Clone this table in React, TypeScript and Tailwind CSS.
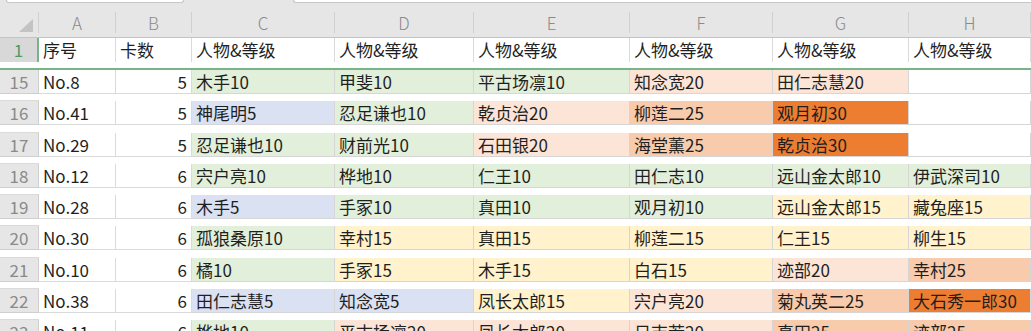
import React from 'react';

type Tone = 'w' | 'g' | 'b' | 'y' | 'p' | 'o' | 'd';

const toneClass: Record<Tone, string> = {
  w: 'bg-white',
  g: 'bg-[#e2efda]',
  b: 'bg-[#d9e1f2]',
  y: 'bg-[#fff2cc]',
  p: 'bg-[#fce4d6]',
  o: 'bg-[#f8cbad]',
  d: 'bg-[#ed7d31]',
};

// [row number, 序号, 卡数, ...[text, tone] for C..H]
const rows: [number, string, number, [string, Tone][]][] = [
  [15, 'No.8', 5, [['木手10', 'g'], ['甲斐10', 'g'], ['平古场凛10', 'g'], ['知念宽20', 'p'], ['田仁志慧20', 'p'], ['', 'w']]],
  [16, 'No.41', 5, [['神尾明5', 'b'], ['忍足谦也10', 'g'], ['乾贞治20', 'p'], ['柳莲二25', 'o'], ['观月初30', 'd'], ['', 'w']]],
  [17, 'No.29', 5, [['忍足谦也10', 'g'], ['财前光10', 'g'], ['石田银20', 'p'], ['海堂薰25', 'o'], ['乾贞治30', 'd'], ['', 'w']]],
  [18, 'No.12', 6, [['宍户亮10', 'g'], ['桦地10', 'g'], ['仁王10', 'g'], ['田仁志10', 'g'], ['远山金太郎10', 'g'], ['伊武深司10', 'g']]],
  [19, 'No.28', 6, [['木手5', 'b'], ['手冢10', 'g'], ['真田10', 'g'], ['观月初10', 'g'], ['远山金太郎15', 'y'], ['藏兔座15', 'y']]],
  [20, 'No.30', 6, [['孤狼桑原10', 'g'], ['幸村15', 'y'], ['真田15', 'y'], ['柳莲二15', 'y'], ['仁王15', 'y'], ['柳生15', 'y']]],
  [21, 'No.10', 6, [['橘10', 'g'], ['手冢15', 'y'], ['木手15', 'y'], ['白石15', 'y'], ['迹部20', 'p'], ['幸村25', 'o']]],
  [22, 'No.38', 6, [['田仁志慧5', 'b'], ['知念宽5', 'b'], ['凤长太郎15', 'y'], ['宍户亮20', 'p'], ['菊丸英二25', 'o'], ['大石秀一郎30', 'd']]],
  [23, 'No.11', 6, [['桦地10', 'g'], ['平古场凛20', 'p'], ['凤长太郎20', 'p'], ['日吉若20', 'p'], ['真田25', 'o'], ['迹部25', 'o']]],
];

const cols = 'grid grid-cols-[39px_77px_76px_143px_139px_156px_143px_136px_1fr]';
const letters = ['A', 'B', 'C', 'D', 'E', 'F', 'G', 'H'];

const App: React.FC = () => {
  return (
    <div
      className="w-[1031px] h-[331px] overflow-hidden bg-[#e6e6e6] text-[17px] text-[#1f1f1f]"
      style={{ fontFamily: '"Noto Sans CJK SC", "Noto Sans", sans-serif' }}
    >
      {/* formula bar edges */}
      <div className="h-[12px] flex">
        <div className="ml-[6px] w-[178px] h-[3px] bg-white border border-t-0 border-[#c6c6c6] rounded-b-[3px]" />
        <div className="ml-[109px] flex-1 h-[3px] bg-white border border-t-0 border-r-0 border-[#c6c6c6] rounded-bl-[3px]" />
      </div>

      {/* column letters */}
      <div className={`${cols} h-[26px] border-b border-[#c4c4c4] text-[#8a8a8a] leading-none`}>
        <div className="relative border-r border-[#d0d0d0]">
          <svg className="absolute left-[19px] top-[7px]" width="14" height="13" viewBox="0 0 14 13">
            <polygon points="14,0 14,13 0,13" fill="#c3c3c3" />
          </svg>
        </div>
        {letters.map((l) => (
          <div key={l} className="flex items-center justify-center border-r border-[#d0d0d0] font-light">
            {l}
          </div>
        ))}
        <div />
      </div>

      {/* header row */}
      <div className={`${cols} h-[32px] bg-white border-b-2 border-[#78b389] leading-none`}>
        <div className="flex items-center justify-center bg-[#d8d8d8] text-[#4f9a63] border-r-2 border-[#78b389]">1</div>
        {['序号', '卡数', '人物&等级', '人物&等级', '人物&等级', '人物&等级', '人物&等级', '人物&等级'].map((t, i) => (
          <div key={i} className="flex items-center pl-[4px] border-r border-[#dadada] whitespace-nowrap">
            {t}
          </div>
        ))}
        <div />
      </div>

      {rows.map(([n, id, cards, cells]) => (
        <div key={n} className={`${cols} h-[31.25px] bg-white leading-none`}>
          <div className="flex items-center justify-center bg-[#e6e6e6] text-[#8a8a8a] border-r border-b border-[#cfcfcf]">
            {n}
          </div>
          <div className="flex items-center pl-[4px] border-r border-b border-[#dadada]">{id}</div>
          <div className="flex items-center justify-end pr-[4px] border-r border-b border-[#dadada]">{cards}</div>
          {cells.map(([t, tone], i) => (
            <div
              key={i}
              className={`flex items-center pl-[4px] border-r border-b border-[#d6d6d6] whitespace-nowrap ${toneClass[tone]}`}
            >
              {t}
            </div>
          ))}
          <div className="border-b border-[#dadada]" />
        </div>
      ))}
    </div>
  );
};

export default App;
